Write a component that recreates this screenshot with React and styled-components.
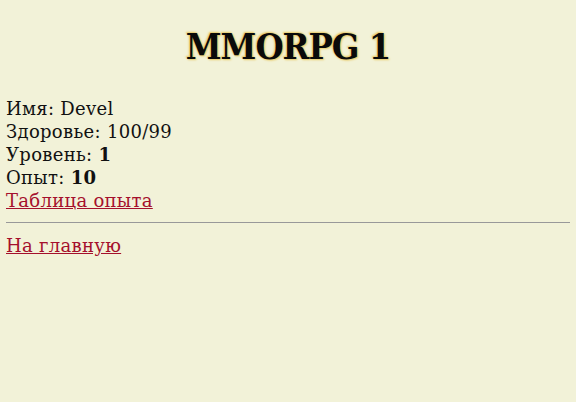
import React from 'react';
import styled, { createGlobalStyle } from 'styled-components';

const GlobalStyle = createGlobalStyle`
  html, body {
    margin: 0;
    background: #f2f2d8;
  }
  body {
    padding: 0 6px;
    font-family: "DejaVu Serif", "Liberation Serif", serif;
    color: #111;
  }
`;

const Title = styled.h1`
  margin: 0;
  padding: 22px 0 27px;
  text-align: center;
  font-family: "DejaVu Serif Condensed", "DejaVu Serif", serif;
  font-stretch: condensed;
  font-size: 36px;
  line-height: 48px;
  font-weight: bold;
  letter-spacing: -1px;
  color: #0a0a0a;
  text-shadow: 1px 1px 2px #e8c860, -1px -1px 2px #e8c860;
`;

const Stats = styled.div`
  font-size: 18px;
  line-height: 23px;
  letter-spacing: 0.3px;
`;

const Row = styled.div``;

const Value = styled.span`
  font-weight: ${(p) => (p.bold ? 'bold' : 'normal')};
`;

const Link = styled.a`
  color: #a5102c;
  text-decoration: underline;
  font-size: 18px;
  line-height: 23px;
  letter-spacing: 0.3px;
`;

const Rule = styled.hr`
  margin: 10px 0 11px;
  border: 0;
  border-top: 1px solid #999;
  height: 0;
`;

export default function App() {
  return (
    <>
      <GlobalStyle />
      <Title>MMORPG 1</Title>
      <Stats>
        <Row>Имя: <Value>Devel</Value></Row>
        <Row>Здоровье: <Value>100/99</Value></Row>
        <Row>Уровень: <Value bold>1</Value></Row>
        <Row>Опыт: <Value bold>10</Value></Row>
        <Row><Link href="#">Таблица опыта</Link></Row>
      </Stats>
      <Rule />
      <Link href="#">На главную</Link>
    </>
  );
}
